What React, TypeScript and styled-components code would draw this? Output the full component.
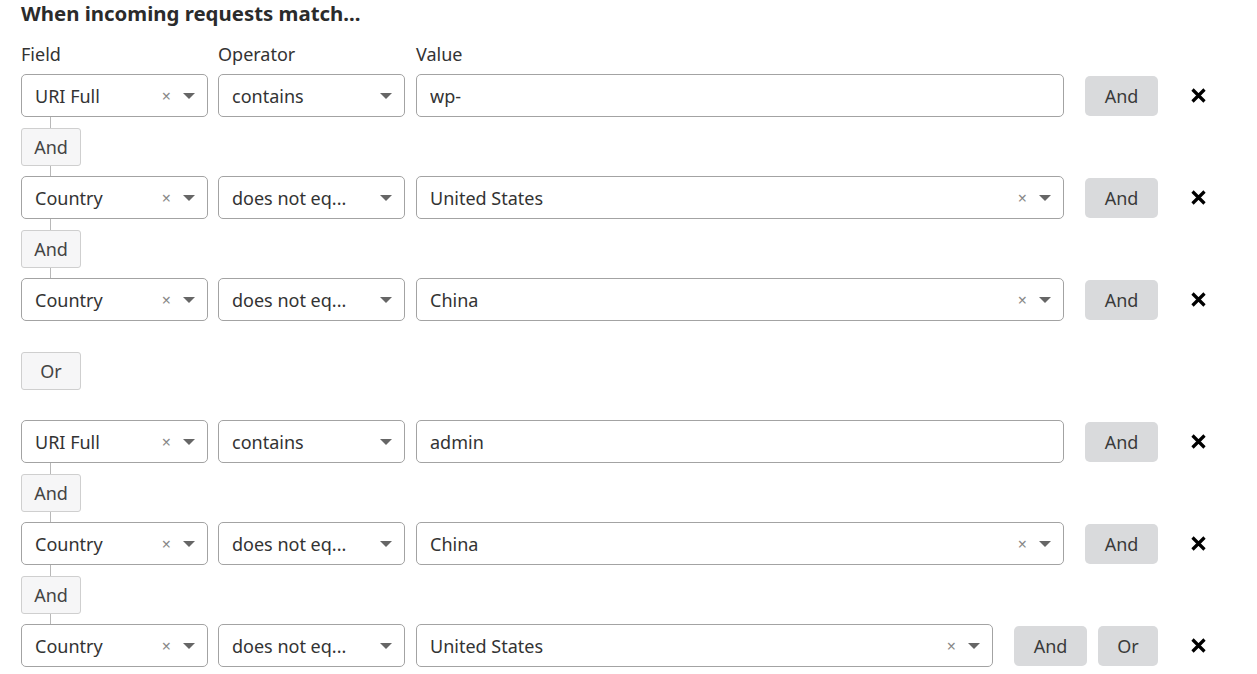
import React from "react";
import styled, { createGlobalStyle } from "styled-components";

const Global = createGlobalStyle`
  html, body { margin: 0; padding: 0; background: #fff; }
  body { font-family: "Noto Sans", "Open Sans", Arial, sans-serif; color: #333; }
`;

const Page = styled.div`
  width: 1185px;
  padding-left: 21px;
`;

const Title = styled.h2`
  margin: 0;
  font-size: 20.4px;
  font-weight: 700;
  line-height: 26px;
  color: #2b2b2b;
`;

const Labels = styled.div`
  display: flex;
  gap: 11px;
  margin-top: 16px;
  height: 24px;
  margin-bottom: 8px;
`;

const Label = styled.div<{ $w?: number }>`
  width: ${(p) => (p.$w ? `${p.$w}px` : "auto")};
  font-size: 18px;
  line-height: 24px;
  color: #333;
`;

const Row = styled.div`
  display: flex;
  align-items: center;
  height: 43px;
`;

const Box = styled.div<{ $w?: number; $grow?: boolean; $gap?: number }>`
  box-sizing: border-box;
  height: 43px;
  ${(p) => (p.$w ? `width: ${p.$w}px; flex: none;` : "")}
  ${(p) => (p.$grow ? "flex: 1;" : "")}
  margin-left: ${(p) => p.$gap ?? 0}px;
  border: 1px solid #a3a3a3;
  border-radius: 5px;
  display: flex;
  align-items: center;
  padding: 0 12px 0 13px;
  font-size: 18px;
  color: #333;
  background: #fff;
`;

const BoxText = styled.span`
  flex: 1;
  white-space: nowrap;
  overflow: hidden;
`;

const Clear = styled.span`
  color: #888;
  font-size: 16px;
  margin-right: 12px;
  line-height: 1;
`;

const Caret = styled.span`
  width: 0;
  height: 0;
  border-left: 6px solid transparent;
  border-right: 6px solid transparent;
  border-top: 6px solid #666;
`;

const Actions = styled.div`
  display: flex;
  gap: 11px;
  margin-left: 21px;
`;

const GrayButton = styled.button<{ $w: number }>`
  width: ${(p) => p.$w}px;
  height: 40px;
  border: none;
  border-radius: 5px;
  background: #d9dadc;
  color: #3a3a3a;
  font-family: inherit;
  font-size: 18px;
  padding: 0;
`;

const Remove = styled.button`
  margin-left: 33px;
  width: 15px;
  height: 15px;
  padding: 0;
  border: none;
  background: none;
  display: flex;
`;

const Connector = styled.div<{ $h: number; $line?: boolean }>`
  position: relative;
  height: ${(p) => p.$h}px;
  display: flex;
  align-items: center;
  ${(p) =>
    p.$line
      ? `&::before { content: ""; position: absolute; left: 29px; top: 0; bottom: 0; width: 1px; background: #b8b8b8; }`
      : ""}
`;

const Joiner = styled.div`
  position: relative;
  box-sizing: border-box;
  width: 60px;
  height: 38px;
  border: 1px solid #cfcfcf;
  border-radius: 3px;
  background: #f6f6f7;
  font-size: 18px;
  color: #444;
  display: flex;
  align-items: center;
  justify-content: center;
`;

type Cond = { field: string; op: string; value: string; select: boolean };

const XIcon = () => (
  <svg width="15" height="15" viewBox="0 0 15 15">
    <path d="M1.5 1.5 L13.5 13.5 M13.5 1.5 L1.5 13.5" stroke="#000" strokeWidth="3.2" />
  </svg>
);

const CondRow: React.FC<{ c: Cond; last?: boolean }> = ({ c, last }) => (
  <Row>
    <Box $w={187}>
      <BoxText>{c.field}</BoxText>
      <Clear>×</Clear>
      <Caret />
    </Box>
    <Box $w={187} $gap={10}>
      <BoxText>{c.op}</BoxText>
      <Caret />
    </Box>
    <Box $grow $gap={11}>
      <BoxText>{c.value}</BoxText>
      {c.select && (
        <>
          <Clear>×</Clear>
          <Caret />
        </>
      )}
    </Box>
    <Actions>
      <GrayButton $w={73}>And</GrayButton>
      {last && <GrayButton $w={60}>Or</GrayButton>}
    </Actions>
    <Remove>
      <XIcon />
    </Remove>
  </Row>
);

const groups: Cond[][] = [
  [
    { field: "URI Full", op: "contains", value: "wp-", select: false },
    { field: "Country", op: "does not eq...", value: "United States", select: true },
    { field: "Country", op: "does not eq...", value: "China", select: true },
  ],
  [
    { field: "URI Full", op: "contains", value: "admin", select: false },
    { field: "Country", op: "does not eq...", value: "China", select: true },
    { field: "Country", op: "does not eq...", value: "United States", select: true },
  ],
];

export default function App() {
  return (
    <Page>
      <Global />
      <Title>When incoming requests match...</Title>
      <Labels>
        <Label $w={186}>Field</Label>
        <Label $w={187}>Operator</Label>
        <Label>Value</Label>
      </Labels>
      {groups.map((g, gi) => (
        <React.Fragment key={gi}>
          {gi > 0 && (
            <Connector $h={99}>
              <Joiner>Or</Joiner>
            </Connector>
          )}
          {g.map((c, ci) => (
            <React.Fragment key={ci}>
              {ci > 0 && (
                <Connector $h={59} $line>
                  <Joiner>And</Joiner>
                </Connector>
              )}
              <CondRow c={c} last={gi === groups.length - 1 && ci === g.length - 1} />
            </React.Fragment>
          ))}
        </React.Fragment>
      ))}
    </Page>
  );
}
